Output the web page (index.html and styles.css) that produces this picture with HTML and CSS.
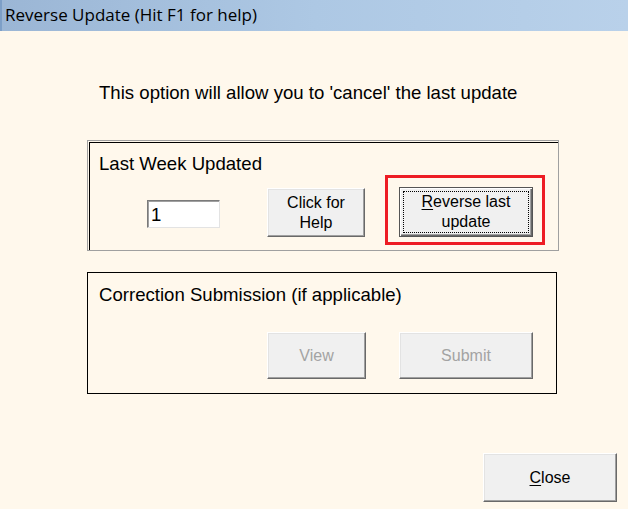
FILE: index.html
```html
<!DOCTYPE html>
<html lang="en">

<head>
    <meta charset="UTF-8">
    <title>Reverse Update</title>
    <link rel="stylesheet" href="styles.css">
</head>

<body>
    <div class="window">
        <div class="titlebar">Reverse Update (Hit F1 for help)</div>

        <div class="content">
            <p class="intro">This option will allow you to 'cancel' the last update</p>

            <div class="group group-etched">
                <div class="group-label">Last Week Updated</div>
                <div class="row">
                    <input class="field" type="text" value="1">
                    <button class="btn btn-help">Click for<br>Help</button>
                    <div class="highlight">
                        <button class="btn btn-default"><u>R</u>everse last<br>update</button>
                    </div>
                </div>
            </div>

            <div class="group group-plain">
                <div class="group-label">Correction Submission (if applicable)</div>
                <div class="row row-bottom">
                    <button class="btn btn-view" disabled>View</button>
                    <button class="btn btn-submit" disabled>Submit</button>
                </div>
            </div>
        </div>

        <div class="footer">
            <button class="btn btn-close"><u>C</u>lose</button>
        </div>
    </div>
</body>

</html>
```

FILE: styles.css
```css
* {
    margin: 0;
    padding: 0;
    box-sizing: border-box;
}

html,
body {
    width: 628px;
    height: 509px;
    overflow: hidden;
}

body {
    background: #fff8ec;
    font-family: "Liberation Sans", Arial, sans-serif;
    font-size: 18.6px;
    color: #000;
}

.titlebar {
    height: 31px;
    padding: 3px 0 0 3px;
    border-left: 2px solid #7d9fc7;
    background: linear-gradient(90deg, #9bb6d5 0%, #adc8e4 50%, #b9d1ea 100%);
    font-family: "Open Sans", "Noto Sans", sans-serif;
    font-size: 17px;
    line-height: 24px;
    color: #000;
}

.content {
    padding-left: 87px;
}

.intro {
    margin: 51px 0 0 12px;
    line-height: 22px;
}

.group {
    width: 470px;
    position: relative;
}

.group-etched {
    margin: 38px 0 0 2px;
    height: 109px;
    border: 1px solid #000;
    padding: 11px 0 0 9px;
}

.group-etched::before {
    content: "";
    position: absolute;
    left: -3px;
    top: -3px;
    width: 470px;
    height: 109px;
    border: 1px solid #a0a0a0;
}

.group-plain {
    margin-top: 21px;
    height: 122px;
    border: 1px solid #000;
    padding: 12px 0 0 11px;
}

.group-label {
    line-height: 20px;
}

.row {
    display: flex;
    align-items: flex-start;
}

.field {
    width: 73px;
    height: 28px;
    margin: 26px 0 0 48px;
    padding: 1px 0 0 3px;
    border: 1px solid;
    border-color: #7a7a7a #e3e3e3 #e3e3e3 #7a7a7a;
    box-shadow: inset 1px 1px 0 #a0a0a0;
    background: #fff;
    font-family: "Liberation Sans", Arial, sans-serif;
    font-size: 18.6px;
    color: #000;
}

.btn {
    position: relative;
    background: #f0f0f0;
    border: 1px solid;
    border-color: #fff #696969 #696969 #fff;
    box-shadow: inset -1px -1px 0 #a0a0a0, inset 1px 1px 0 #e3e3e3;
    font-family: "Liberation Sans", Arial, sans-serif;
    font-size: 16px;
    line-height: 20px;
    color: #000;
    text-align: center;
}

.btn u {
    text-decoration: underline;
    text-underline-offset: 2px;
}

.btn-help {
    width: 98px;
    height: 49px;
    margin: 14px 0 0 47px;
}

.highlight {
    width: 160px;
    height: 70px;
    margin: 1px 0 0 20px;
    border: 3px solid #ed1c24;
    padding: 9px 0 0 11px;
}

.btn-default {
    width: 134px;
    height: 50px;
    border: 1px solid #555;
    box-shadow: inset 1px 1px 0 #fff, inset -1px -1px 0 #696969, inset -2px -2px 0 #a0a0a0;
}

.btn-default::after {
    content: "";
    position: absolute;
    left: 3px;
    top: 3px;
    right: 3px;
    bottom: 3px;
    border: 1px dotted #000;
}

.row-bottom {
    margin-top: 27px;
}

.btn:disabled {
    color: #a3a3a3;
}

.btn-view {
    width: 99px;
    height: 47px;
    margin-left: 168px;
}

.btn-submit {
    width: 134px;
    height: 47px;
    margin-left: 33px;
}

.footer {
    display: flex;
    justify-content: flex-end;
    padding: 59px 11px 0 0;
}

.btn-close {
    width: 134px;
    height: 49px;
}
```
